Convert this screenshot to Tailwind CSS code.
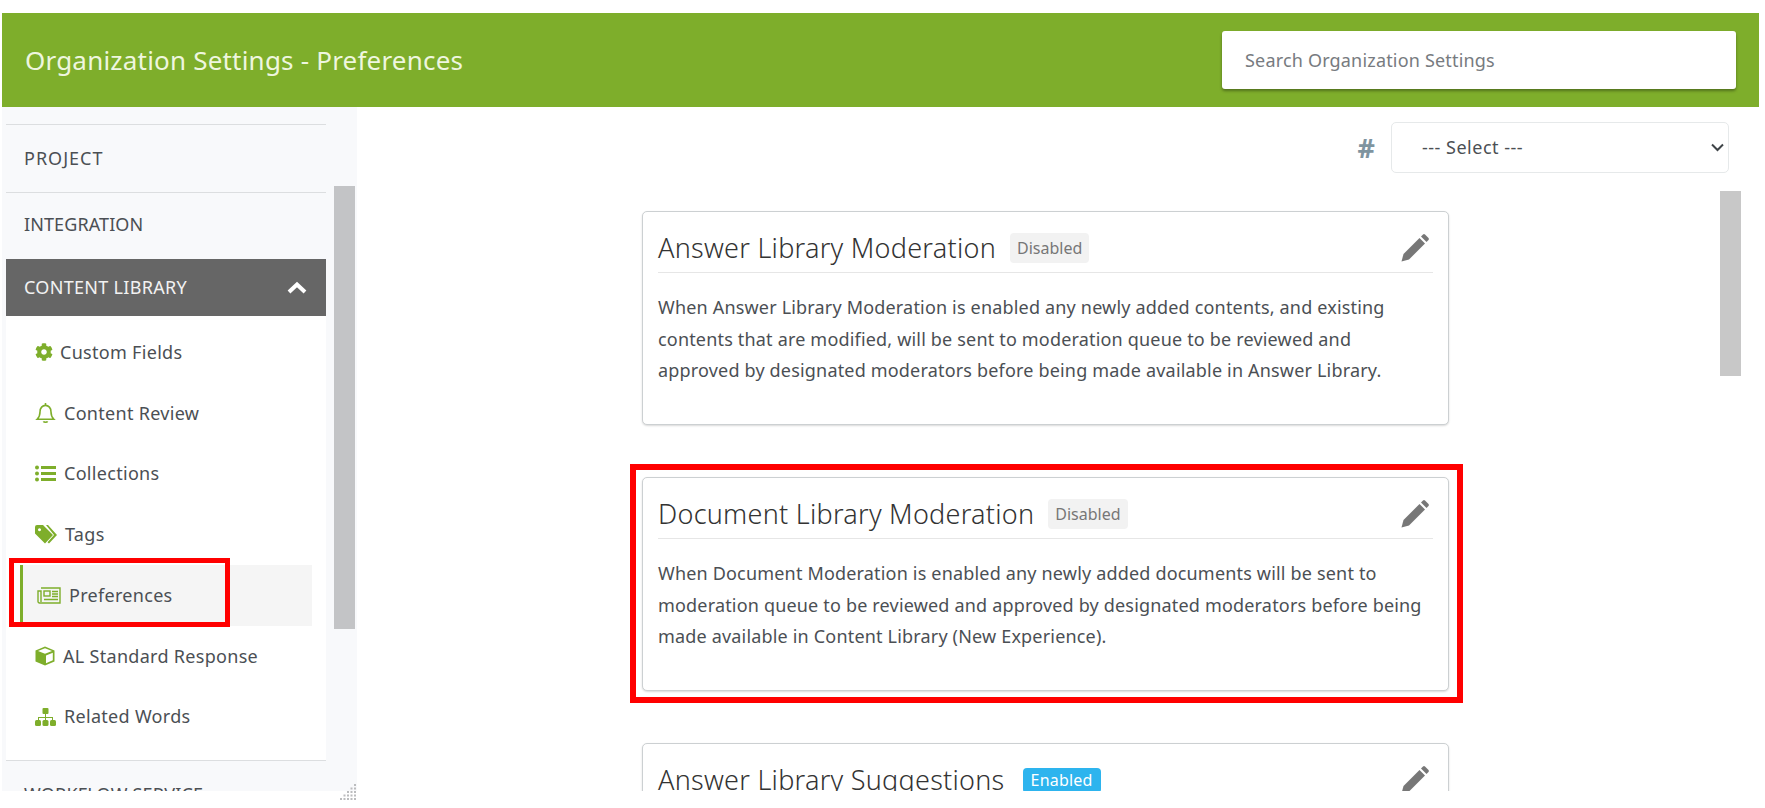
<!DOCTYPE html>
<html lang="en">
<head>
    <meta charset="UTF-8">
    <title>Organization Settings - Preferences</title>
    <script src="https://cdn.jsdelivr.net/npm/@tailwindcss/browser@4"></script>
</head>
<body class="bg-white h-[808px] overflow-hidden font-['Noto_Sans',sans-serif] text-[#4b4f54]">
    <div class="relative ml-[2px] pt-[13px] w-[1757px] h-[791px] flex flex-col">
        <!-- Header -->
        <header class="h-[94px] shrink-0 bg-[#7eae2b] flex items-center justify-between pl-[23px] pr-[23px]">
            <h1 class="text-[26px] tracking-[0.2px] text-[#eef6df]">Organization Settings - Preferences</h1>
            <input placeholder="Search Organization Settings" class="w-[514px] h-[58px] bg-white rounded-[3px] shadow-[0_2px_3px_rgba(0,0,0,0.35)] px-[23px] text-[18px] tracking-[0.18px] placeholder:text-[#777b80]">
        </header>

        <div class="flex flex-1 min-h-0">
            <!-- Sidebar -->
            <aside class="relative w-[355px] shrink-0 bg-[#f8f9fb] pl-[4px] pt-[17px] overflow-hidden">
                <div class="w-[320px]">
                    <div class="h-[67.5px] border-t border-[#dcdee0] flex items-center pl-[18px] text-[18px] tracking-[1px]">PROJECT</div>
                    <div class="h-[67.5px] border-t border-[#dcdee0] flex items-center pl-[18px] pb-[3px] text-[18px] tracking-[0.1px]">INTEGRATION</div>
                    <div class="h-[57px] bg-[#666666] text-[#f2f2f2] flex items-center justify-between pl-[18px] pr-[18px] text-[18px] tracking-[0.3px]">
                        CONTENT LIBRARY
                        <svg class="w-[22px] h-[14px]" viewBox="0 0 22 14"><path d="M3 11 L11 3.5 L19 11" fill="none" stroke="#fff" stroke-width="4"/></svg>
                    </div>
                    <ul class="bg-white h-[444px] pt-[6px] text-[18px] tracking-[0.3px]">
                        <li class="h-[60.7px] flex items-center pl-[29px] gap-[7px]">
                            <svg class="w-[18px] h-[18px] shrink-0" viewBox="0 0 512 512" fill="#7eae2b"><path d="M487.4 315.7l-42.6-24.6c4.3-23.2 4.3-47 0-70.2l42.6-24.6c4.9-2.8 7.1-8.6 5.5-14-11.1-35.6-30-67.8-54.7-94.6-3.8-4.1-10-5.1-14.8-2.3L380.8 110c-17.9-15.4-38.5-27.3-60.8-35.1V25.8c0-5.6-3.9-10.5-9.4-11.7-36.7-8.2-74.3-7.8-109.2 0-5.5 1.2-9.4 6.1-9.4 11.7V75c-22.2 7.9-42.8 19.8-60.8 35.1L88.7 85.5c-4.9-2.8-11-1.9-14.8 2.3-24.7 26.7-43.6 58.9-54.7 94.6-1.7 5.4.6 11.2 5.5 14L67.3 221c-4.3 23.2-4.3 47 0 70.2l-42.6 24.6c-4.9 2.8-7.1 8.6-5.5 14 11.1 35.6 30 67.8 54.7 94.6 3.8 4.1 10 5.1 14.8 2.3l42.6-24.6c17.9 15.4 38.5 27.3 60.8 35.1v49.2c0 5.6 3.9 10.5 9.4 11.7 36.7 8.2 74.3 7.8 109.2 0 5.5-1.2 9.4-6.1 9.4-11.7v-49.2c22.2-7.9 42.8-19.8 60.8-35.1l42.6 24.6c4.9 2.8 11 1.9 14.8-2.3 24.7-26.7 43.6-58.9 54.7-94.6 1.5-5.5-.7-11.3-5.6-14.1zM256 336c-44.1 0-80-35.9-80-80s35.9-80 80-80 80 35.9 80 80-35.9 80-80 80z"/></svg>
                            Custom Fields
                        </li>
                        <li class="h-[60.7px] flex items-center pl-[29px] gap-[8px]">
                            <svg class="w-[21px] h-[22px] shrink-0" viewBox="0 0 20 21" fill="none" stroke="#7eae2b" stroke-width="1.5"><path d="M2 16.5h16c-2-2-2.8-3.5-2.8-7.5 0-3.2-2.2-5.8-5.2-5.8S4.800 5.800 4.800 9c0 4-.8 5.500-2.800 7.500z"/><path d="M8 18.500c.5 1 3.500 1 4 0M10 1v2"/></svg>
                            Content Review
                        </li>
                        <li class="h-[60.7px] flex items-center pl-[29px] gap-[8px]">
                            <svg class="w-[21px] h-[17px] shrink-0" viewBox="0 0 21 17" fill="#7eae2b"><circle cx="2" cy="2.500" r="2"/><circle cx="2" cy="8.500" r="2"/><circle cx="2" cy="14.500" r="2"/><rect x="6" y="1" width="15" height="3"/><rect x="6" y="7" width="15" height="3"/><rect x="6" y="13" width="15" height="3"/></svg>
                            Collections
                        </li>
                        <li class="h-[60.7px] flex items-center pl-[29px] gap-[8px]">
                            <svg class="w-[22px] h-[19px] shrink-0" viewBox="0 0 22 19" fill="#7eae2b"><path d="M0 2a2 2 0 0 1 2-2h6l10 10-8 8.500L0 8.500zM4.500 3.200a1.500 1.500 0 1 0 .01 0z" fill-rule="evenodd"/><path d="M11 0h2l9 10-8 8.500-1.500-1.200L19 10z"/></svg>
                            Tags
                        </li>
                        <li class="relative h-[61px] flex items-center ml-[14px] w-[292px] bg-[#f5f5f5] border-l-[3px] border-[#7eae2b] pl-[14px] gap-[8px]">
                            <svg class="w-[24px] h-[17px] shrink-0" viewBox="0 0 24 17" fill="none" stroke="#7eae2b" stroke-width="1.400"><path d="M4 1h19v15H2.500A1.500 1.500 0 0 1 1 14.500V4h3v11"/><rect x="7" y="4" width="6" height="5"/><path d="M15 4.500h6M15 7h6M15 9.500h6M7 12.500h14"/></svg>
                            Preferences
                        </li>
                        <li class="h-[60.7px] flex items-center pl-[29px] gap-[8px]">
                            <svg class="w-[20px] h-[20px] shrink-0" viewBox="0 0 20 20"><path d="M10 0.500 19.500 4.500V15.500L10 19.500 0.500 15.500V4.500z" fill="#7eae2b"/><path d="M3 5 10 2.200 17 5 10 7.800z" fill="#fff"/><path d="M11 9.500 17.800 6.700V14.300L11 17.200z" fill="#fff"/></svg>
                            AL Standard Response
                        </li>
                        <li class="h-[60.7px] flex items-center pl-[29px] gap-[8px]">
                            <svg class="w-[21px] h-[18px] shrink-0" viewBox="0 0 21 18" fill="#7eae2b"><rect x="7.500" y="0" width="6" height="6" rx="1"/><path d="M10 6h1v3h7v3h-1v-2h-6v2h-1v-2H4v2H3V9h7z"/><rect x="0" y="12" width="6" height="6" rx="1.500"/><rect x="7.500" y="12" width="6" height="6" rx="1.500"/><rect x="15" y="12" width="6" height="6" rx="1.500"/></svg>
                            Related Words
                        </li>
                    </ul>
                    <div class="h-[67px] border-t border-[#dcdee0] flex items-center pl-[18px] text-[18px] tracking-[0.2px]">WORKFLOW SERVICE</div>
                </div>
                <!-- sidebar scrollbar -->
                <div class="absolute left-[332px] top-[79px] w-[21px] h-[443px] bg-[#c3c4c6]"></div>
                <!-- red highlight -->
                <div class="absolute left-[7px] top-[451px] w-[221px] h-[69px] border-[5px] border-[#ff0000]"></div>
            </aside>

            <!-- Main -->
            <main class="relative flex-1 min-w-0 overflow-hidden">
                <div class="flex justify-end items-center gap-[16px] pt-[15px] pr-[30px]">
                    <span class="text-[27px] leading-none font-bold text-[#7f949f]">#</span>
                    <div class="relative">
                        <select class="block appearance-none w-[338px] h-[51px] bg-white border border-[#e6e9ea] rounded-[5px] px-[30px] text-[18px] tracking-[0.5px]">
                            <option>--- Select ---</option>
                        </select>
                        <svg class="absolute right-[4px] top-[20px] w-[15px] h-[11px]" viewBox="0 0 15 11"><path d="M2 2.500 7.500 8 13 2.500" fill="none" stroke="#3f4448" stroke-width="2"/></svg>
                    </div>
                </div>

                <div class="ml-[285px] mt-[38px] w-[807px] flex flex-col gap-[52px]">
                    <section class="h-[214px] bg-white border border-[#ccd0d2] rounded-[5px] shadow-[0_1px_2px_rgba(0,0,0,0.15)] px-[15px] pt-[14px]">
                        <div class="h-[47px] pb-[2px] border-b border-[#e6e6e6] flex items-center">
                            <h2 class="text-[27px] font-light tracking-[0.26px] text-[#333]">Answer Library Moderation</h2>
                            <span class="ml-[14px] h-[30px] px-[7px] flex items-center bg-[#f2f2f2] rounded-[4px] text-[16px] text-[#777]">Disabled</span>
                            <svg class="ml-auto mr-[3px] w-[30px] h-[30px]" viewBox="0 0 30 30" fill="#777"><path d="M1.500 28.500 3.500 21 19.500 5 25 10.500 9 26.500z"/><path d="M21 3.500 23 1.500a1.500 1.500 0 0 1 2 0l3.500 3.500a1.500 1.500 0 0 1 0 2l-2 2z"/></svg>
                        </div>
                        <p class="mt-[19px] text-[18px] tracking-[0.18px] leading-[31.6px]">When Answer Library Moderation is enabled any newly added contents, and existing<br>contents that are modified, will be sent to moderation queue to be reviewed and<br>approved by designated moderators before being made available in Answer Library.</p>
                    </section>

                    <section class="h-[214px] bg-white border border-[#ccd0d2] rounded-[5px] shadow-[0_1px_2px_rgba(0,0,0,0.15)] px-[15px] pt-[14px]">
                        <div class="h-[47px] pb-[2px] border-b border-[#e6e6e6] flex items-center">
                            <h2 class="text-[27px] font-light tracking-[0.26px] text-[#333]">Document Library Moderation</h2>
                            <span class="ml-[14px] h-[30px] px-[7px] flex items-center bg-[#f2f2f2] rounded-[4px] text-[16px] text-[#777]">Disabled</span>
                            <svg class="ml-auto mr-[3px] w-[30px] h-[30px]" viewBox="0 0 30 30" fill="#777"><path d="M1.500 28.500 3.500 21 19.500 5 25 10.500 9 26.500z"/><path d="M21 3.500 23 1.500a1.500 1.500 0 0 1 2 0l3.500 3.500a1.500 1.500 0 0 1 0 2l-2 2z"/></svg>
                        </div>
                        <p class="mt-[19px] text-[18px] tracking-[0.18px] leading-[31.6px]">When Document Moderation is enabled any newly added documents will be sent to<br>moderation queue to be reviewed and approved by designated moderators before being<br>made available in Content Library (New Experience).</p>
                    </section>

                    <section class="h-[214px] bg-white border border-[#ccd0d2] rounded-[5px] shadow-[0_1px_2px_rgba(0,0,0,0.15)] px-[15px] pt-[14px]">
                        <div class="h-[47px] pb-[2px] border-b border-[#e6e6e6] flex items-center">
                            <h2 class="text-[27px] font-light tracking-[0.26px] text-[#333]">Answer Library Suggestions</h2>
                            <span class="ml-[18px] h-[25px] px-[8px] flex items-center bg-[#2db4ee] rounded-[4px] text-[16px] tracking-[0.2px] text-white">Enabled</span>
                            <svg class="ml-auto mr-[3px] w-[30px] h-[30px]" viewBox="0 0 30 30" fill="#777"><path d="M1.500 28.500 3.500 21 19.500 5 25 10.500 9 26.500z"/><path d="M21 3.500 23 1.500a1.500 1.500 0 0 1 2 0l3.500 3.500a1.500 1.500 0 0 1 0 2l-2 2z"/></svg>
                        </div>
                    </section>
                </div>

                <!-- main scrollbar -->
                <div class="absolute left-[1363px] top-[84px] w-[21px] h-[185px] bg-[#c8c8c8]"></div>
                <!-- red highlight -->
                <div class="absolute left-[273px] top-[357px] w-[833px] h-[239px] border-[6px] border-[#ff0000]"></div>
            </main>
        </div>

        <!-- resize grip -->
        <svg class="absolute left-[337px] top-[784px] w-[18px] h-[17px]" viewBox="0 0 18 17" fill="#bbbcbe"><path d="M15 0h2v2h-2zM15 3.500h2v2h-2zM11.500 3.500h2v2h-2zM15 7h2v2h-2zM11.500 7h2v2h-2zM8 7h2v2H8zM15 10.500h2v2h-2zM11.500 10.500h2v2h-2zM8 10.500h2v2H8zM4.500 10.500h2v2h-2zM15 14h2v2h-2zM11.500 14h2v2h-2zM8 14h2v2H8zM4.500 14h2v2h-2zM1 14h2v2H1z"/></svg>
    </div>
</body>
</html>
